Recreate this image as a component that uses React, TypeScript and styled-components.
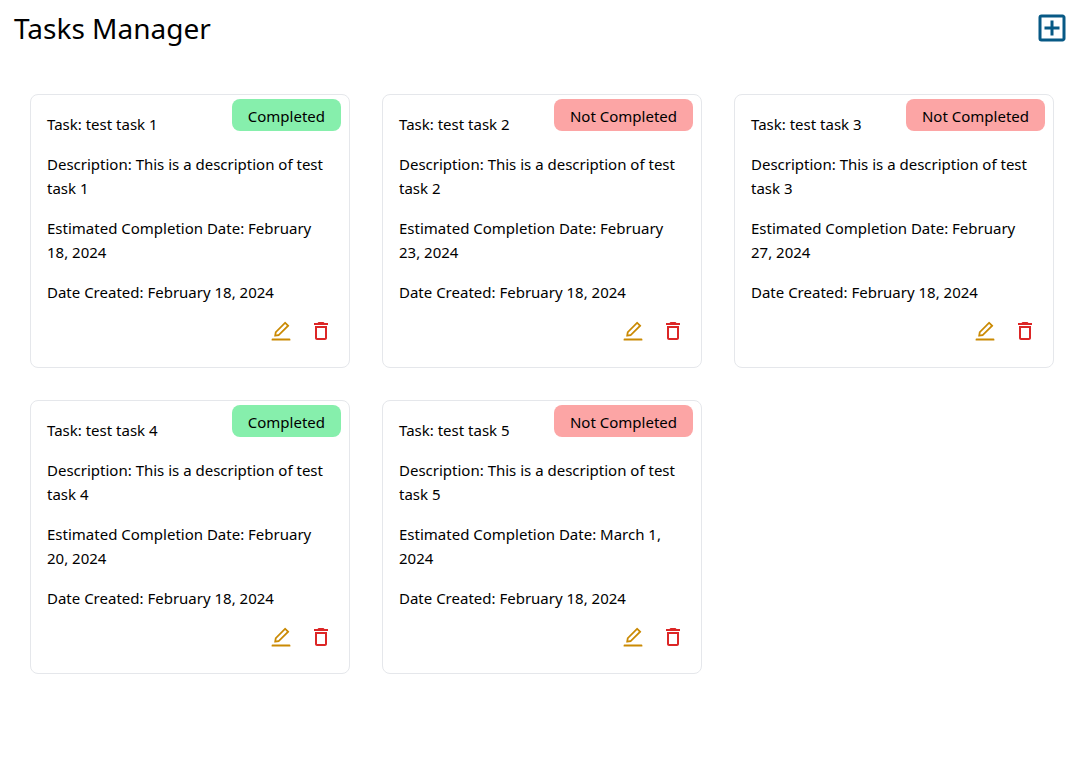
import React from 'react';
import styled, { createGlobalStyle } from 'styled-components';
import { MdOutlineAddBox, MdOutlineDelete } from 'react-icons/md';
import { AiOutlineEdit } from 'react-icons/ai';

const GlobalStyle = createGlobalStyle`
  * { box-sizing: border-box; }
  body {
    margin: 0;
    background: #fff;
    color: #000;
    font-family: "Segoe UI", "Noto Sans", "Open Sans", sans-serif;
    font-size: 15px;
    line-height: 24px;
  }
`;

const Page = styled.div`
  padding: 7px 12px 32px 14px;
`;

const Header = styled.header`
  display: flex;
  justify-content: space-between;
  align-items: center;
`;

const Title = styled.h1`
  margin: 0;
  font-size: 28px;
  line-height: 42px;
  font-weight: 400;
`;

const IconButton = styled.button<{ $color: string }>`
  display: flex;
  padding: 0;
  border: 0;
  background: none;
  color: ${(p) => p.$color};
  cursor: pointer;
`;

const Grid = styled.main`
  display: grid;
  grid-template-columns: repeat(auto-fill, minmax(300px, 1fr));
  gap: 32px;
  margin-top: 29px;
  padding: 16px;
`;

const Card = styled.article`
  position: relative;
  padding: 17px 16px 16px;
  border: 1px solid #e5e7eb;
  border-radius: 8px;
`;

const Line = styled.p`
  margin: 0 0 16px;

  &:last-of-type {
    margin-bottom: 15px;
  }
`;

const Badge = styled.span<{ $done: boolean }>`
  position: absolute;
  top: 4px;
  right: 8px;
  padding: 5px 16px 3px;
  border-radius: 8px;
  background: ${(p) => (p.$done ? '#86efac' : '#fca5a5')};
`;

const Actions = styled.div`
  display: flex;
  justify-content: flex-end;
  gap: 16px;
  padding-bottom: 8px;
`;

const tasks = [
  { id: 1, due: 'February 18, 2024', done: true },
  { id: 2, due: 'February 23, 2024', done: false },
  { id: 3, due: 'February 27, 2024', done: false },
  { id: 4, due: 'February 20, 2024', done: true },
  { id: 5, due: 'March 1, 2024', done: false },
];

export default function App() {
  return (
    <Page>
      <GlobalStyle />
      <Header>
        <Title>Tasks Manager</Title>
        <IconButton $color="#075985" aria-label="Add task">
          <MdOutlineAddBox size={36} />
        </IconButton>
      </Header>
      <Grid>
        {tasks.map((t) => (
          <Card key={t.id}>
            <Badge $done={t.done}>{t.done ? 'Completed' : 'Not Completed'}</Badge>
            <Line>{`Task: test task ${t.id}`}</Line>
            <Line>{`Description: This is a description of test task ${t.id}`}</Line>
            <Line>{`Estimated Completion Date: ${t.due}`}</Line>
            <Line>Date Created: February 18, 2024</Line>
            <Actions>
              <IconButton $color="#ca8a04" aria-label="Edit task">
                <AiOutlineEdit size={24} />
              </IconButton>
              <IconButton $color="#dc2626" aria-label="Delete task">
                <MdOutlineDelete size={24} />
              </IconButton>
            </Actions>
          </Card>
        ))}
      </Grid>
    </Page>
  );
}
